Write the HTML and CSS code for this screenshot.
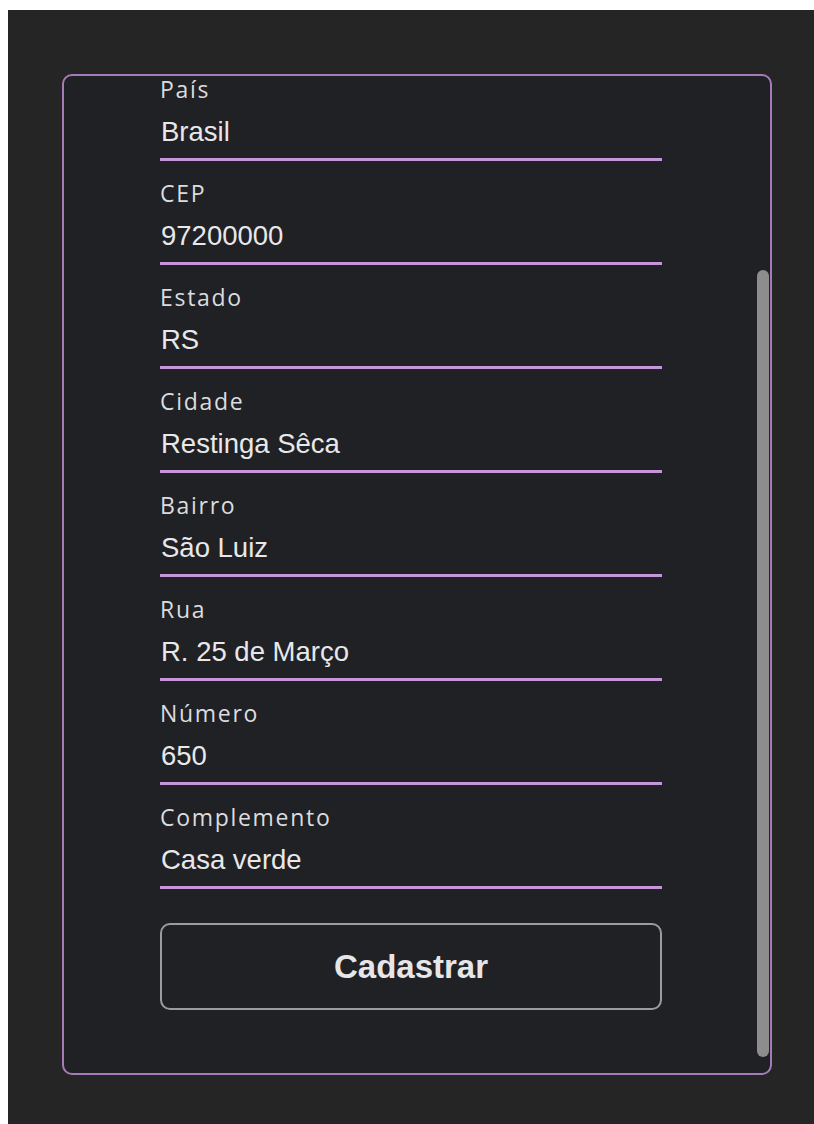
FILE: index.html
```html
<!DOCTYPE html>
<html lang="pt-BR">
<head>
<meta charset="utf-8">
<title>Endereço</title>
<link rel="stylesheet" href="styles.css">
</head>
<body>
<main class="page">
  <form class="card">
    <div class="fields">
      <label class="field"><span class="field-label">País</span><input class="field-input" type="text" value="Brasil"></label>
      <label class="field"><span class="field-label">CEP</span><input class="field-input" type="text" value="97200000"></label>
      <label class="field"><span class="field-label">Estado</span><input class="field-input" type="text" value="RS"></label>
      <label class="field"><span class="field-label">Cidade</span><input class="field-input" type="text" value="Restinga Sêca"></label>
      <label class="field"><span class="field-label">Bairro</span><input class="field-input" type="text" value="São Luiz"></label>
      <label class="field"><span class="field-label">Rua</span><input class="field-input" type="text" value="R. 25 de Março"></label>
      <label class="field"><span class="field-label">Número</span><input class="field-input" type="text" value="650"></label>
      <label class="field"><span class="field-label">Complemento</span><input class="field-input" type="text" value="Casa verde"></label>
    </div>
    <button class="submit" type="button">Cadastrar</button>
    <div class="scroll-thumb"></div>
  </form>
</main>
</body>
</html>
```

FILE: styles.css
```css
body {
  margin: 10px 0 0 8px;
  background: #ffffff;
}

.page {
  box-sizing: border-box;
  min-height: 1114px;
  padding: 64px 0 0 54px;
  background: #252525;
}

.card {
  position: relative;
  box-sizing: border-box;
  width: 710px;
  margin: 0;
  padding: 1px 0 63px 96px;
  background: #202125;
  border: 2px solid #a77ab9;
  border-radius: 10px;
  overflow: hidden;
  display: flex;
  flex-direction: column;
}

.fields {
  display: flex;
  flex-direction: column;
  gap: 20px;
  width: 502px;
}

.field {
  display: flex;
  flex-direction: column;
  gap: 13px;
}

.field-label {
  font-family: "Open Sans", "Noto Sans", sans-serif;
  font-size: 23px;
  font-weight: 500;
  line-height: 24px;
  letter-spacing: 1.7px;
  color: #dcdcde;
}

.field-input {
  box-sizing: border-box;
  width: 100%;
  height: 47px;
  margin: 0;
  padding: 0 0 8px 1px;
  border: none;
  border-bottom: 3px solid #c895db;
  background: transparent;
  outline: none;
  font-family: "Liberation Sans", Arial, sans-serif;
  font-size: 27.5px;
  color: #e8e8ea;
}

.submit {
  box-sizing: border-box;
  width: 502px;
  height: 87px;
  margin-top: 34px;
  padding: 0;
  background: transparent;
  border: 2px solid #9c9c9e;
  border-radius: 10px;
  font-family: "Liberation Sans", Arial, sans-serif;
  font-weight: bold;
  font-size: 33px;
  color: #e6e6e8;
}

/* scrollbar thumb of the scrolled form panel */
.scroll-thumb {
  position: absolute;
  top: 194px;
  right: 1px;
  width: 12px;
  height: 787px;
  border-radius: 6px;
  background: #8d8d8d;
}
```
